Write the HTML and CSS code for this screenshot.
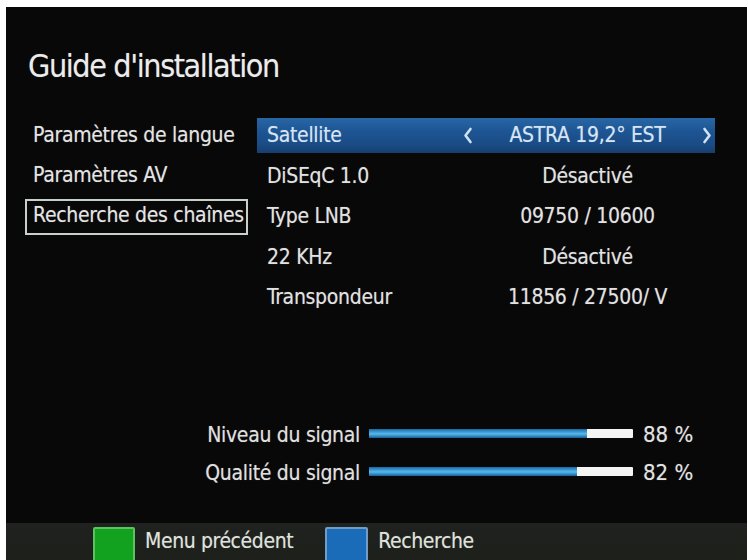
FILE: index.html
```html
<!DOCTYPE html>
<html lang="fr">
<head>
<meta charset="utf-8">
<title>Guide d'installation</title>
<link rel="stylesheet" href="styles.css">
</head>
<body>
<div class="screen">
  <h1 class="title">Guide d'installation</h1>
  <div class="main">
    <ul class="menu">
      <li class="menu-item">Paramètres de langue</li>
      <li class="menu-item">Paramètres AV</li>
      <li class="menu-item menu-item--focus">Recherche des chaînes</li>
    </ul>
    <div class="panel">
      <div class="row row--active">
        <span class="row-label">Satellite</span>
        <span class="row-value">
          <svg class="chev" viewBox="0 0 10 17" width="10" height="17"><polyline points="7.5,2 2.5,8.5 7.5,15" /></svg>
          <span class="row-text">ASTRA 19,2° EST</span>
          <svg class="chev" viewBox="0 0 10 17" width="10" height="17"><polyline points="2.5,2 7.5,8.5 2.5,15" /></svg>
        </span>
      </div>
      <div class="row">
        <span class="row-label">DiSEqC 1.0</span>
        <span class="row-value"><span class="row-text">Désactivé</span></span>
      </div>
      <div class="row">
        <span class="row-label">Type LNB</span>
        <span class="row-value"><span class="row-text">09750 / 10600</span></span>
      </div>
      <div class="row">
        <span class="row-label">22 KHz</span>
        <span class="row-value"><span class="row-text">Désactivé</span></span>
      </div>
      <div class="row">
        <span class="row-label">Transpondeur</span>
        <span class="row-value"><span class="row-text">11856 / 27500/ V</span></span>
      </div>
    </div>
  </div>
  <div class="signal">
    <span class="signal-label">Niveau du signal</span>
    <span class="bar"><span class="bar-fill" style="width:82.6%"></span></span>
    <span class="signal-value">88 %</span>
    <span class="signal-label">Qualité du signal</span>
    <span class="bar"><span class="bar-fill" style="width:78.8%"></span></span>
    <span class="signal-value">82 %</span>
  </div>
  <div class="footer">
    <span class="key key--green"></span>
    <span class="key-label">Menu précédent</span>
    <span class="key key--blue"></span>
    <span class="key-label">Recherche</span>
  </div>
</div>
</body>
</html>
```
FILE: styles.css
```css
html, body {
  margin: 0;
  padding: 0;
  background: #ffffff;
}

body {
  font-family: "DejaVu Sans Condensed", "DejaVu Sans", sans-serif;
  font-stretch: condensed;
  width: 748px;
  height: 560px;
  overflow: hidden;
}

.screen {
  margin: 7px 1px 0 6px;
  height: 553px;
  background: #080808;
  display: flex;
  flex-direction: column;
  overflow: hidden;
  color: #e2e2e2;
  text-shadow: 0 0 1px rgba(255, 255, 255, 0.35);
}

.title {
  margin: 39px 0 0 22px;
  font-size: 32px;
  line-height: 40px;
  font-weight: normal;
  letter-spacing: -1.4px;
  color: #ececec;
}

.main {
  display: flex;
  margin-top: 32px;
  padding-left: 19px;
}

.menu {
  list-style: none;
  margin: 0;
  padding: 1px 0 0 0;
  width: 232px;
  display: flex;
  flex-direction: column;
  align-items: flex-start;
  gap: 4px;
}

.menu-item {
  font-size: 21px;
  line-height: 29px;
  letter-spacing: -0.3px;
  border: 2px solid transparent;
  padding: 0 2px 3px 6px;
  color: #e4e4e4;
  white-space: nowrap;
}

.menu-item--focus {
  border-color: #c9d0c9;
}

.panel {
  width: 458px;
  display: flex;
  flex-direction: column;
  gap: 5.5px;
}

.row {
  display: flex;
  height: 35px;
  line-height: 35px;
  font-size: 21px;
  letter-spacing: -0.3px;
  padding: 0 3px 0 10px;
  color: #e2e2e2;
}

.row--active {
  background: linear-gradient(to bottom, #2866a6 0%, #1d5492 40%, #1a4c86 75%, #163f70 100%);
  color: #d5e5f5;
}

.row-label {
  width: 196px;
  flex: none;
  white-space: nowrap;
}

.row-value {
  flex: 1;
  display: flex;
  align-items: center;
  padding: 0 10px;
}

.row--active .row-value {
  padding: 0;
}

.row-text {
  flex: 1;
  text-align: center;
  white-space: nowrap;
}

.chev {
  flex: none;
  fill: none;
  stroke: #cfe1f4;
  stroke-width: 2.6;
  stroke-linecap: round;
  stroke-linejoin: round;
}

.signal {
  margin-top: 105px;
  display: grid;
  grid-template-columns: 354px 264px auto;
  column-gap: 9px;
  row-gap: 8px;
  align-items: center;
}

.signal-label {
  text-align: right;
  font-size: 21px;
  line-height: 30px;
  letter-spacing: -0.3px;
  color: #e0e0e0;
  white-space: nowrap;
}

.bar {
  display: flex;
  height: 9px;
  margin-bottom: 4px;
  background: #f4f4f4;
  border-radius: 1px;
}

.bar-fill {
  display: block;
  height: 100%;
  background: linear-gradient(to bottom, #1a67a3 0%, #3f9fd6 35%, #5ab9ea 55%, #2f86c2 80%, #1a5f96 100%);
}

.signal-value {
  margin-left: 1px;
  font-size: 22px;
  line-height: 30px;
  color: #e2e2e2;
  white-space: nowrap;
}

.footer {
  margin-top: auto;
  height: 37px;
  background: linear-gradient(to bottom, #20221f, #1d1f1b);
  display: flex;
  align-items: flex-start;
  padding: 4px 0 0 87px;
  box-sizing: border-box;
}

.key {
  flex: none;
  width: 42px;
  height: 40px;
  box-sizing: border-box;
  border: 2px solid;
  border-radius: 2px;
}

.key--green {
  background: #12a21f;
  border-color: #5cc45e;
}

.key--blue {
  background: #1a6bb8;
  border-color: #6f9dc8;
  margin-left: 32px;
  width: 43px;
}

.key-label {
  margin-left: 10px;
  font-size: 21px;
  line-height: 28px;
  letter-spacing: -0.4px;
  color: #dfe3dc;
  white-space: nowrap;
}
```
